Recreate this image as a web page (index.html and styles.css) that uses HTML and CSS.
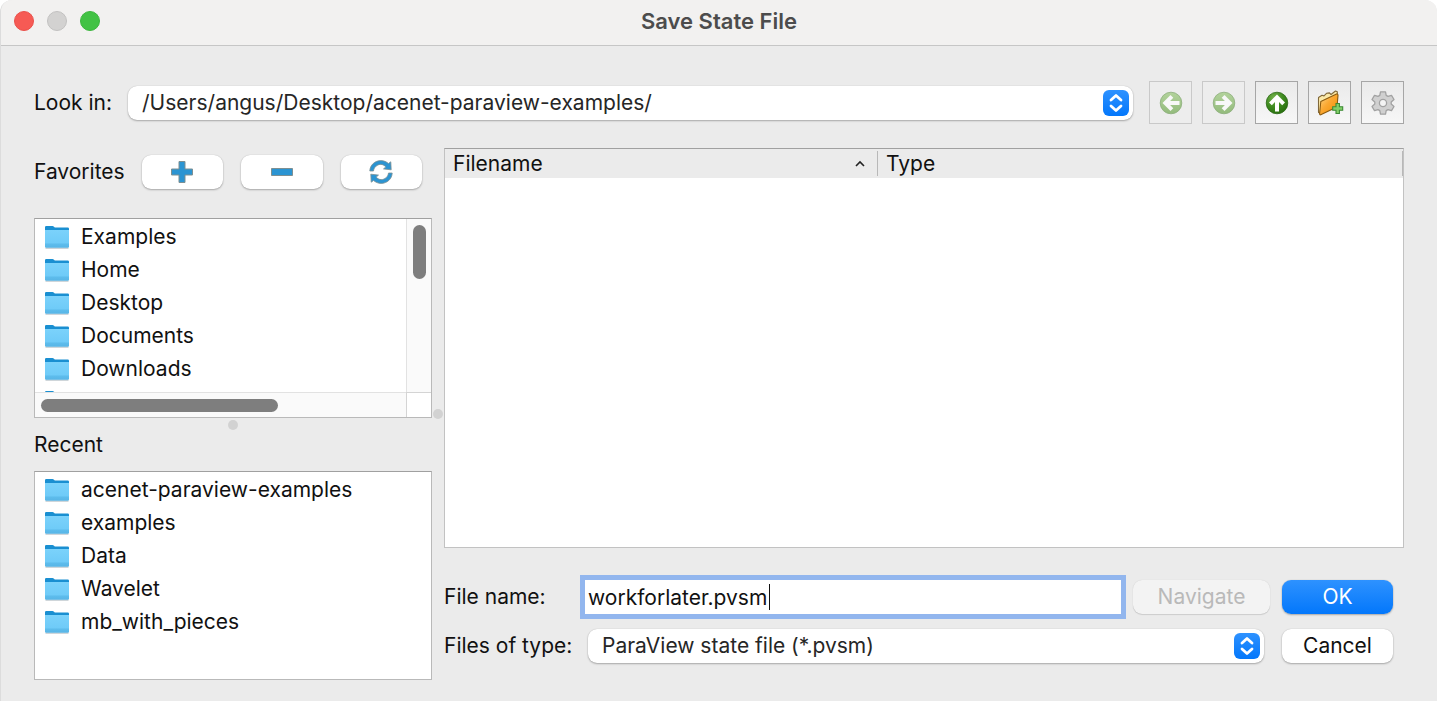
FILE: index.html
```html
<!DOCTYPE html>
<html lang="en">
<head>
<meta charset="utf-8">
<title>Save State File</title>
<link rel="stylesheet" href="styles.css">
</head>
<body>
<svg class="defs" aria-hidden="true">
  <defs>
    <linearGradient id="folder-front" x1="0" y1="0" x2="0" y2="1">
      <stop offset="0" stop-color="#7bd2fb"/><stop offset="0.72" stop-color="#6fcbf8"/><stop offset="0.8" stop-color="#5dbcec"/><stop offset="1" stop-color="#58b5e6"/>
    </linearGradient>
    <linearGradient id="knob" x1="0" y1="0" x2="0" y2="1">
      <stop offset="0" stop-color="#2e92ff"/><stop offset="1" stop-color="#0377fb"/>
    </linearGradient>
    <radialGradient id="green" cx="0.35" cy="0.25" r="0.85">
      <stop offset="0" stop-color="#72b04a"/><stop offset="0.5" stop-color="#3f8b20"/><stop offset="1" stop-color="#256b0c"/>
    </radialGradient>
    <linearGradient id="green-off" x1="0" y1="0" x2="0" y2="1">
      <stop offset="0" stop-color="#b3d39c"/><stop offset="1" stop-color="#93bb7c"/>
    </linearGradient>
    <linearGradient id="orange" x1="0" y1="0" x2="1" y2="1">
      <stop offset="0" stop-color="#ffd98c"/><stop offset="0.45" stop-color="#fba832"/><stop offset="1" stop-color="#f18c00"/>
    </linearGradient>
    <symbol id="folder" viewBox="0 0 26 24">
      <path d="M1.500 22.500h23v1.200h-23z" fill="#8a9ba5" opacity="0.6"/>
      <path d="M1 2.200Q1 1 2.200 1H8.500Q9.300 1 10 1.700L10.800 2.500H23.800Q25 2.500 25 3.700V8H1z" fill="#1a8fd1"/>
      <path d="M1 5H25V21.500Q25 22.700 23.800 22.700H2.200Q1 22.700 1 21.500z" fill="url(#folder-front)"/>
    </symbol>
    <symbol id="updown" viewBox="0 0 26 26">
      <rect width="26" height="26" rx="6" fill="url(#knob)"/>
      <path d="M8 10l5-4.500 5 4.500M8 16l5 4.500 5-4.500" fill="none" stroke="#fff" stroke-width="2.800" stroke-linecap="round" stroke-linejoin="round"/>
    </symbol>
    <symbol id="arrow-up" viewBox="0 0 24 24">
      <circle cx="12" cy="12" r="10.800" fill="url(#green)" stroke="#2c6a17" stroke-width="0.800"/>
      <path d="M12 3.500l8 8-2.800 2.800-3.200-3.200V20.500h-4v-9.400l-3.200 3.200L4 11.500z" fill="#fff"/>
    </symbol>
    <symbol id="arrow-off" viewBox="0 0 24 24">
      <circle cx="12" cy="12" r="10.800" fill="url(#green-off)" stroke="#8eaf7e" stroke-width="0.800"/>
      <path d="M3.500 12l8-8 2.800 2.800-3.200 3.200H20.500v4h-9.400l3.200 3.200-2.800 2.800z" fill="#f8f8f8"/>
    </symbol>
  </defs>
</svg>
<main class="window">
  <header class="titlebar">
    <div class="lights">
      <button class="light light-close" type="button" aria-label="Close"></button>
      <button class="light light-min" type="button" aria-label="Minimize" disabled></button>
      <button class="light light-zoom" type="button" aria-label="Zoom"></button>
    </div>
    <h1 class="title">Save State File</h1>
  </header>

  <form class="dialog">
    <div class="lookin">
      <label for="path">Look in:</label>
      <div class="combo combo-path">
        <select id="path"><option>/Users/angus/Desktop/acenet-paraview-examples/</option></select>
        <svg class="knob" aria-hidden="true"><use href="#updown"/></svg>
      </div>
      <div class="tools">
        <button class="tool" type="button" aria-label="Back" disabled><svg class="disc"><use href="#arrow-off"/></svg></button>
        <button class="tool" type="button" aria-label="Forward" disabled><svg class="disc disc-right"><use href="#arrow-off"/></svg></button>
        <button class="tool" type="button" aria-label="Parent folder"><svg class="disc"><use href="#arrow-up"/></svg></button>
        <button class="tool" type="button" aria-label="New folder">
          <svg class="tool-icon" viewBox="0 0 28 28">
            <path d="M2.500 8.500l3.500-2.200 2 .6 2.500-2.600 3-.4 1.500 1.600L19.500 2l1.800.8v13L5 24.500l-2.500-1z" fill="#fbe9a8" stroke="#80683a" stroke-width="1.100" stroke-linejoin="round"/>
            <path d="M4.800 12.500L20.500 5Q22 4.600 22 6.500L21 18 4.700 25.800Q3.600 26 3.600 24.500z" fill="url(#orange)" stroke="#8a5a10" stroke-width="1.100" stroke-linejoin="round"/>
            <path d="M20 14.500h3.400v3.300h3.300v3.400h-3.300v3.300H20v-3.300h-3.300v-3.400H20z" fill="#82cf68" stroke="#3d8a35" stroke-width="1.100"/>
          </svg>
        </button>
        <button class="tool" type="button" aria-label="Settings">
          <svg class="tool-icon" viewBox="0 0 28 28">
            <path d="M11.500 2.800h5l.7 3.600 1.800 1 3.500-1.100 2.500 4.200-2.800 2.500v2l2.800 2.500-2.500 4.200-3.500-1.100-1.800 1-.7 3.600h-5l-.7-3.600-1.800-1-3.500 1.100L3 17.500 5.800 15v-2L3 10.500l2.500-4.200L9 7.400l1.800-1z" fill="#d0d0d0" stroke="#a2a2a2" stroke-width="1.300" stroke-linejoin="round"/>
            <circle cx="14" cy="14" r="3.600" fill="#f4f4f4" stroke="#a2a2a2" stroke-width="1.300"/>
          </svg>
        </button>
      </div>
    </div>

    <div class="panes">
      <aside class="places">
        <div class="fav-bar">
          <h2 class="heading">Favorites</h2>
          <div class="fav-buttons">
            <button class="push" type="button" aria-label="Add favorite"><svg class="fav-icon" viewBox="0 0 24 24"><path d="M9 1.500h6V9h7.500v6H15v7.500H9V15H1.500V9H9z" fill="#2b94d2" stroke="#7d8f92"/></svg></button>
            <button class="push" type="button" aria-label="Remove favorite"><svg class="fav-icon" viewBox="0 0 24 24"><path d="M1.500 8.500h21v7h-21z" fill="#2b94d2" stroke="#7d8f92"/></svg></button>
            <button class="push" type="button" aria-label="Reset favorites">
              <svg class="fav-icon" viewBox="0 0 24 24">
                <path d="M.8 11C1 5 6 .6 11.800.6c3 0 5.600 1.100 7.600 2.900L21.800 1.800l.4 8-7.700-.9 2.300-2C15.400 5.300 13.800 4.400 11.800 4.400 8 4.400 5 7.200 4.500 11z" fill="#2b94d2" stroke="#7d8f92" stroke-width="0.800"/>
                <path d="M23.200 13C23 19 18 23.400 12.200 23.400c-3 0-5.600-1.100-7.600-2.900L2.200 22.200l-.4-8 7.700.9-2.300 2c1.400 1.600 3 2.500 5 2.500 3.800 0 6.800-2.800 7.300-6.600z" fill="#2b94d2" stroke="#7d8f92" stroke-width="0.800"/>
              </svg>
            </button>
          </div>
        </div>
        <div class="list list-fav">
          <ul class="rows">
            <li class="row"><svg class="folder"><use href="#folder"/></svg>Examples</li>
            <li class="row"><svg class="folder"><use href="#folder"/></svg>Home</li>
            <li class="row"><svg class="folder"><use href="#folder"/></svg>Desktop</li>
            <li class="row"><svg class="folder"><use href="#folder"/></svg>Documents</li>
            <li class="row"><svg class="folder"><use href="#folder"/></svg>Downloads</li>
            <li class="row"><svg class="folder"><use href="#folder"/></svg></li>
          </ul>
          <div class="vbar"><div class="vthumb"></div></div>
          <div class="hbar"><div class="hthumb"></div></div>
          <div class="corner"></div>
        </div>
        <div class="split-h"><span class="grip"></span></div>
        <h2 class="heading heading-recent">Recent</h2>
        <div class="list list-recent">
          <ul class="rows">
            <li class="row"><svg class="folder"><use href="#folder"/></svg>acenet-paraview-examples</li>
            <li class="row"><svg class="folder"><use href="#folder"/></svg>examples</li>
            <li class="row"><svg class="folder"><use href="#folder"/></svg>Data</li>
            <li class="row"><svg class="folder"><use href="#folder"/></svg>Wavelet</li>
            <li class="row"><svg class="folder"><use href="#folder"/></svg>mb_with_pieces</li>
          </ul>
        </div>
      </aside>

      <div class="split-v"><span class="grip"></span></div>

      <section class="files">
        <div class="file-view">
          <table class="file-table">
            <colgroup><col class="col-name"><col></colgroup>
            <thead>
              <tr>
                <th scope="col"><div class="head">Filename<svg class="sort" viewBox="0 0 10 8"><path d="M1 6l4-4 4 4" fill="none" stroke="#222" stroke-width="1.600"/></svg></div></th>
                <th scope="col"><div class="head">Type</div></th>
              </tr>
            </thead>
          </table>
        </div>
        <div class="fields">
          <label for="name">File name:</label>
          <div class="name-box"><input id="name" type="text" value="workforlater.pvsm"><span class="caret"></span></div>
          <button class="push push-off" type="button" disabled>Navigate</button>
          <button class="push push-main" type="submit">OK</button>
          <label for="kind">Files of type:</label>
          <div class="combo combo-kind">
            <select id="kind"><option>ParaView state file (*.pvsm)</option></select>
            <svg class="knob" aria-hidden="true"><use href="#updown"/></svg>
          </div>
          <button class="push" type="button">Cancel</button>
        </div>
      </section>
    </div>
  </form>
</main>
</body>
</html>
```
FILE: styles.css
```css
* { box-sizing: border-box; }

body {
  margin: 0;
  background: #fff;
  color: #111;
  font-family: Inter, "Liberation Sans", sans-serif;
  font-size: 21px;
  line-height: 26px;
}

button, input, select { font: inherit; color: inherit; margin: 0; }
button { padding: 0; border: 0; }
h1, h2, ul { margin: 0; padding: 0; list-style: none; }
svg { display: block; }
.defs { position: absolute; width: 0; height: 0; }

.window {
  display: flex;
  flex-direction: column;
  min-height: 100vh;
  background: #ebebeb;
  border-left: 1px solid #dcdcdc;
  border-top-left-radius: 12px;
  border-top-right-radius: 12px;
  overflow: hidden;
}

.titlebar {
  display: grid;
  grid-template-columns: 1fr auto 1fr;
  align-items: center;
  height: 46px;
  padding: 0 13px 4px;
  background: #f2f1f0;
  border-bottom: 1px solid #c6c6c6;
}
.lights { display: flex; gap: 13px; }
.light { width: 20px; height: 20px; border-radius: 50%; border: 1px solid #e9504a; background: #f65a54; }
.light-min { background: #d3d2d1; border-color: #c2c1c0; }
.light-zoom { background: #42c244; border-color: #3db63e; }
.title { font-size: 22px; font-weight: 600; color: #4c4c4c; }

.dialog {
  flex: 1;
  display: flex;
  flex-direction: column;
  gap: 24px;
  padding: 35px 33px 21px 33px;
}

.lookin { display: flex; align-items: center; gap: 16px; }
.combo { position: relative; }
.combo-path { flex: 1; }
.combo select {
  display: block;
  width: 100%;
  height: 34px;
  padding: 0 40px 0 14px;
  border: 0;
  border-radius: 9px;
  appearance: none;
  background: #fff;
  color: #262626;
  box-shadow: 0 1px 2px rgba(0, 0, 0, 0.28), 0 0 1px rgba(0, 0, 0, 0.2);
}
.knob { position: absolute; right: 4px; top: 4px; width: 26px; height: 26px; pointer-events: none; }

.tools { display: flex; gap: 10px; }
.tool {
  display: grid;
  place-items: center;
  width: 43px;
  height: 43px;
  border: 1px solid #a6a6a6;
  background: linear-gradient(#eaeaea, #f7f7f7);
}
.tool:disabled { border-color: #c9c9c9; background: #ededed; }
.disc { width: 24px; height: 24px; }
.disc-right { transform: scaleX(-1); }
.tool-icon { width: 28px; height: 28px; }

.panes { flex: 1; display: flex; }
.places { display: flex; flex-direction: column; width: 398px; }
.fav-bar { display: flex; align-items: center; gap: 17px; padding: 7px 10px 29px 0; }
.fav-buttons { flex: 1; display: flex; gap: 18px; }
.heading { font-size: 21px; font-weight: 400; }
.push {
  display: grid;
  place-items: center;
  height: 34px;
  border-radius: 9px;
  background: #fff;
  box-shadow: 0 1px 2px rgba(0, 0, 0, 0.28), 0 0 1px rgba(0, 0, 0, 0.2);
}
.fav-buttons .push { flex: 1; }
.push-off { background: #f3f3f3; color: #b9b9b9; box-shadow: 0 1px 1px rgba(0, 0, 0, 0.12), 0 0 1px rgba(0, 0, 0, 0.15); }
.push-main { background: linear-gradient(#2e92ff, #0377fb); color: #fff; }
.fav-icon { width: 24px; height: 24px; }

.list { background: #fff; border: 1px solid #b9b9b9; border-top-color: #a0a0a0; overflow: hidden; }
.list-fav {
  display: grid;
  grid-template: minmax(0, 1fr) 25px / minmax(0, 1fr) 25px;
  height: 200px;
}
.rows { padding-top: 1px; overflow: hidden; }
.row { display: flex; align-items: center; gap: 11px; height: 33px; padding-left: 9px; white-space: nowrap; }
.folder { width: 26px; height: 24px; flex: none; }
.vbar { padding: 6px 5px 0 6px; background: #fafafa; border-left: 1px solid #e2e2e2; }
.vthumb { height: 54px; border-radius: 7px; background: #7e7e7e; }
.hbar { padding: 6px 6px 0; background: #fafafa; border-top: 1px solid #e2e2e2; }
.hthumb { width: 66%; height: 13px; border-radius: 7px; background: #7e7e7e; }
.corner { border-left: 1px solid #d4d4d4; border-top: 1px solid #d4d4d4; }
.grip { display: block; width: 10px; height: 10px; border-radius: 50%; background: #d2d2d2; }
.split-h { display: grid; place-items: center; height: 14px; }
.heading-recent { padding-bottom: 13px; }
.list-recent { flex: 1; }
.split-v { display: grid; place-items: center; width: 12px; }

.files { flex: 1; display: flex; flex-direction: column; min-width: 0; }
.file-view { flex: 1; background: #fff; border: 1px solid #c2c2c2; border-top-color: #a0a0a0; }
.file-table { width: 100%; table-layout: fixed; border-collapse: collapse; }
.col-name { width: 433px; }
.file-table th { padding: 2px 0; background: #ebebeb; font-weight: 400; text-align: left; }
.head { display: flex; justify-content: space-between; align-items: center; height: 25px; padding: 0 12px 0 8px; border-right: 1px solid #b8b8b8; }
.sort { width: 10px; height: 8px; }

.fields {
  display: grid;
  grid-template-columns: 129px 1fr 137px 111px;
  gap: 15px 12px;
  align-items: center;
  padding: 32px 11px 17px 0;
}
.name-box { position: relative; }
.name-box input {
  display: block;
  width: 100%;
  height: 34px;
  padding: 0 3px;
  border: 0;
  border-radius: 0;
  outline: 5px solid #92b6ee;
  background: #fff;
}
.caret { position: absolute; left: 184px; top: 4px; width: 1px; height: 26px; background: #111; }
.combo-kind { grid-column: 2 / 4; margin: 0 6px 0 3px; }
```
